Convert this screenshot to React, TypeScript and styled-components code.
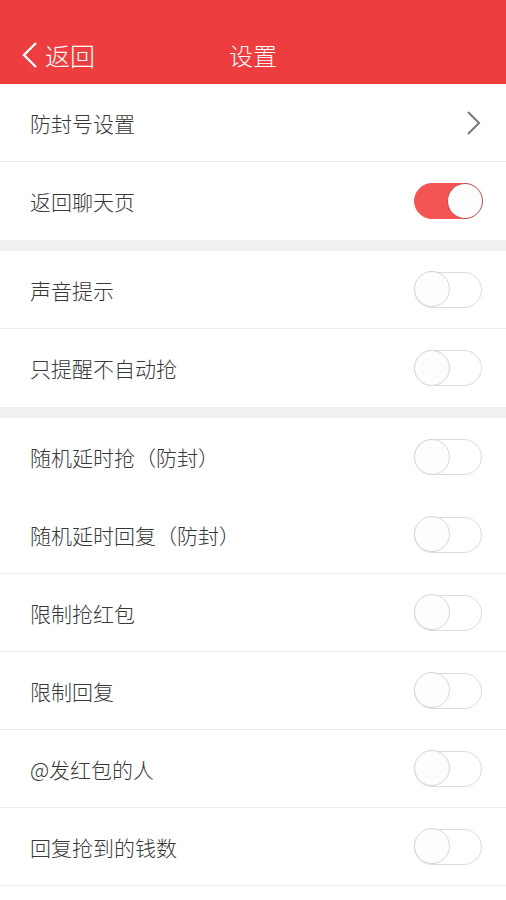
import React, { useState } from "react";
import styled, { createGlobalStyle } from "styled-components";

const GlobalStyle = createGlobalStyle`
  html, body {
    margin: 0;
    padding: 0;
    background: #ffffff;
    font-family: "Noto Sans CJK SC", "Noto Sans", sans-serif;
  }
`;

const Page = styled.div`
  width: 506px;
  min-height: 900px;
  background: #ffffff;
`;

const Header = styled.header`
  height: 84px;
  background: #ee3d3f;
  display: grid;
  grid-template-columns: 1fr auto 1fr;
  align-items: end;
  padding-bottom: 12px;
  box-sizing: border-box;
  color: #ffffff;
`;

const Back = styled.div`
  display: flex;
  align-items: center;
  gap: 6px;
  padding-left: 21px;
  font-size: 25px;
  line-height: 34px;
  font-weight: 300;
`;

const Title = styled.div`
  font-size: 24px;
  line-height: 34px;
  font-weight: 300;
`;

const Group = styled.section`
  background: #ffffff;
`;

const Gap = styled.div`
  height: 11px;
  background: #f0f0f0;
`;

const Row = styled.div<{ $divider?: boolean }>`
  height: 78px;
  display: flex;
  align-items: center;
  justify-content: space-between;
  padding: 0 24px 0 30px;
  border-bottom: ${(p) => (p.$divider ? "1px solid #ececec" : "none")};
  box-sizing: border-box;
`;

const Label = styled.span`
  font-size: 21px;
  font-weight: 300;
  color: #383838;
`;

const Toggle = styled.button<{ $on: boolean }>`
  position: relative;
  width: 68px;
  height: 36px;
  border-radius: 18px;
  padding: 0;
  cursor: pointer;
  box-sizing: border-box;
  border: 1.5px solid ${(p) => (p.$on ? "#f25553" : "#dcdcdc")};
  background: ${(p) => (p.$on ? "#f25553" : "#ffffff")};
`;

const Knob = styled.span<{ $on: boolean }>`
  position: absolute;
  top: -1.5px;
  left: ${(p) => (p.$on ? "32px" : "-1.5px")};
  width: 36px;
  height: 36px;
  border-radius: 50%;
  box-sizing: border-box;
  background: #fcfdfd;
  border: 1.5px solid ${(p) => (p.$on ? "#c44a4a" : "#d6d6d6")};
`;

function Switch({ initial }: { initial: boolean }) {
  const [on, setOn] = useState(initial);
  return (
    <Toggle $on={on} onClick={() => setOn(!on)}>
      <Knob $on={on} />
    </Toggle>
  );
}

const Chevron = () => (
  <svg width="16" height="26" viewBox="0 0 16 26">
    <path d="M2 2 L13 13 L2 24" fill="none" stroke="#777" strokeWidth="2" />
  </svg>
);

const BackArrow = () => (
  <svg width="18" height="28" viewBox="0 0 18 28">
    <path d="M15 2 L3 14 L15 26" fill="none" stroke="#fff" strokeWidth="2.4" />
  </svg>
);

type Item = { label: string; on?: boolean; divider?: boolean; link?: boolean };

const groups: Item[][] = [
  [
    { label: "防封号设置", link: true, divider: true },
    { label: "返回聊天页", on: true },
  ],
  [
    { label: "声音提示", divider: true },
    { label: "只提醒不自动抢" },
  ],
  [
    { label: "随机延时抢（防封）" },
    { label: "随机延时回复（防封）", divider: true },
    { label: "限制抢红包", divider: true },
    { label: "限制回复", divider: true },
    { label: "@发红包的人", divider: true },
    { label: "回复抢到的钱数", divider: true },
  ],
];

export default function App() {
  return (
    <Page>
      <GlobalStyle />
      <Header>
        <Back>
          <BackArrow />
          返回
        </Back>
        <Title>设置</Title>
        <div />
      </Header>
      {groups.map((items, gi) => (
        <React.Fragment key={gi}>
          {gi > 0 && <Gap />}
          <Group>
            {items.map((it) => (
              <Row key={it.label} $divider={it.divider}>
                <Label>{it.label}</Label>
                {it.link ? <Chevron /> : <Switch initial={!!it.on} />}
              </Row>
            ))}
          </Group>
        </React.Fragment>
      ))}
    </Page>
  );
}
